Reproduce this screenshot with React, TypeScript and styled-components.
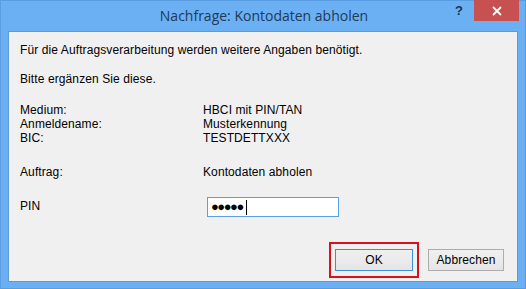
import React from "react";
import styled, { createGlobalStyle } from "styled-components";

const GlobalStyle = createGlobalStyle`
  html, body {
    margin: 0;
    padding: 0;
    background: #ffffff;
  }
`;

const Frame = styled.div`
  width: 526px;
  height: 289px;
  box-sizing: border-box;
  background: #6bb0f3;
  border: 1px solid #5a9de0;
  display: flex;
  flex-direction: column;
`;

const TitleBar = styled.div`
  height: 30px;
  display: flex;
  align-items: flex-start;
  position: relative;
`;

const Title = styled.div`
  flex: 1;
  text-align: center;
  font-family: "Open Sans", "Noto Sans", sans-serif;
  font-size: 14px;
  line-height: 30px;
  color: #1d3a58;
  padding-left: 2px;
`;

const Controls = styled.div`
  position: absolute;
  right: 6px;
  top: -1px;
  display: flex;
  align-items: flex-start;
`;

const HelpButton = styled.div`
  width: 30px;
  height: 20px;
  display: flex;
  align-items: center;
  justify-content: center;
  font-family: "Liberation Sans", Arial, sans-serif;
  font-weight: bold;
  font-size: 13px;
  color: #1d3550;
  padding-left: 2px;
`;

const CloseButton = styled.div`
  width: 45px;
  height: 21px;
  background: #c75050;
  display: flex;
  align-items: center;
  justify-content: center;
`;

const Client = styled.div`
  margin: 0 7px;
  height: 251px;
  box-sizing: border-box;
  border: 1px solid #5e9bd4;
  background: #f0f0f0;
  padding: 11px 11px 0 11px;
  font-family: "Liberation Sans", Arial, sans-serif;
  font-size: 12px;
  line-height: 14px;
  letter-spacing: 0.1px;
  color: #000;
  display: flex;
  flex-direction: column;
`;

const Line = styled.div<{ $gap?: number }>`
  margin-top: ${(p) => p.$gap ?? 0}px;
`;

const Table = styled.div<{ $gap: number }>`
  margin-top: ${(p) => p.$gap}px;
  display: grid;
  grid-template-columns: 183px 1fr;
`;

const PinRow = styled.div`
  margin-top: 18px;
  display: grid;
  grid-template-columns: 187px 1fr;
  align-items: start;
`;

const PinLabel = styled.div`
  padding-top: 2px;
`;

const PinInput = styled.div`
  width: 132px;
  height: 20px;
  box-sizing: border-box;
  background: #fff;
  border: 1px solid #5aa0e6;
  display: flex;
  align-items: center;
  padding-left: 3px;
  font-size: 13px;
  letter-spacing: -1.5px;
`;

const Caret = styled.span`
  display: inline-block;
  width: 1px;
  height: 15px;
  background: #000;
  margin-left: 3px;
`;

const Buttons = styled.div`
  margin-top: 25px;
  display: flex;
  justify-content: flex-end;
  align-items: center;
  padding-right: 2px;
  gap: 9px;
`;

const Highlight = styled.div`
  border: 2px solid #d4141c;
  padding: 5px 4px;
`;

const Button = styled.div<{ $default?: boolean; $w: number }>`
  width: ${(p) => p.$w}px;
  height: 22px;
  box-sizing: border-box;
  border: 1px solid ${(p) => (p.$default ? "#3c8fd8" : "#acacac")};
  background: linear-gradient(#f0f0f0, #e5e5e5);
  display: flex;
  align-items: center;
  justify-content: center;
  font-size: 12px;
`;

const rows = [
  ["Medium:", "HBCI mit PIN/TAN"],
  ["Anmeldename:", "Musterkennung"],
  ["BIC:", "TESTDETTXXX"],
];

export default function App() {
  return (
    <>
      <GlobalStyle />
      <Frame>
        <TitleBar>
          <Title>Nachfrage: Kontodaten abholen</Title>
          <Controls>
            <HelpButton>?</HelpButton>
            <CloseButton>
              <svg width="10" height="10" viewBox="0 0 10 10">
                <path d="M1 1 L9 9 M9 1 L1 9" stroke="#fff" strokeWidth="1.8" />
              </svg>
            </CloseButton>
          </Controls>
        </TitleBar>
        <Client>
          <Line>Für die Auftragsverarbeitung werden weitere Angaben benötigt.</Line>
          <Line $gap={15}>Bitte ergänzen Sie diese.</Line>
          <Table $gap={17}>
            {rows.map(([k, v]) => (
              <React.Fragment key={k}>
                <div>{k}</div>
                <div>{v}</div>
              </React.Fragment>
            ))}
          </Table>
          <Table $gap={20}>
            <div>Auftrag:</div>
            <div>Kontodaten abholen</div>
          </Table>
          <PinRow>
            <PinLabel>PIN</PinLabel>
            <PinInput>
              ●●●●●<Caret />
            </PinInput>
          </PinRow>
          <Buttons>
            <Highlight>
              <Button $default $w={78}>OK</Button>
            </Highlight>
            <Button $w={76}>Abbrechen</Button>
          </Buttons>
        </Client>
      </Frame>
    </>
  );
}
